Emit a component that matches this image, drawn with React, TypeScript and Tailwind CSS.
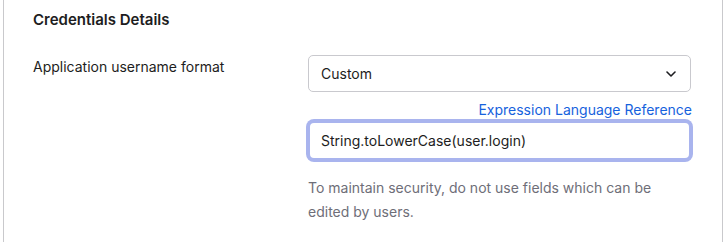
export default function App() {
  return (
    <div
      className="w-[724px] h-[242px] bg-white overflow-hidden"
      style={{ fontFamily: "Inter, 'Noto Sans', sans-serif" }}
    >
      <div className="ml-[3px] mr-[1px] h-full border-l border-r border-[#c9c9cc] pl-[29px] pr-[30px] pt-[10px]">
        <h2 className="text-[15px] leading-5 font-semibold text-[#1d1d21]">Credentials Details</h2>
        <div className="mt-[25px] grid grid-cols-[275px_1fr]">
          <div className="pt-[2px] text-[14px] leading-5 text-[#1d1d21]">Application username format</div>
          <div className="flex flex-col">
            <div className="h-[37px] w-[383px] rounded-[5px] border border-[#c9c9ce] bg-white pl-[12px] pr-[14px] flex items-center justify-between">
              <span className="text-[14px] text-[#1d1d21]">Custom</span>
              <svg width="10" height="6" viewBox="0 0 10 6" fill="none">
                <path d="M1 1l4 4 4-4" stroke="#1d1d21" strokeWidth="1.6" strokeLinecap="round" strokeLinejoin="round" />
              </svg>
            </div>
            <div className="mt-[8px] text-right text-[14px] leading-5 text-[#1662dd]">Expression Language Reference</div>
            <div className="mt-[1px] h-[39px] w-[383px] rounded-[6px] border-2 border-[#a9b4ee] ring-2 ring-[#a9b4ee] bg-white pl-[11px] flex items-center">
              <span className="text-[14px] text-[#1d1d21]">String.toLowerCase(user.login)</span>
            </div>
            <p className="mt-[16px] max-w-[370px] text-[14px] leading-[24px] text-[#6e6e78]">
              To maintain security, do not use fields which can be edited by users.
            </p>
          </div>
        </div>
      </div>
    </div>
  );
}
